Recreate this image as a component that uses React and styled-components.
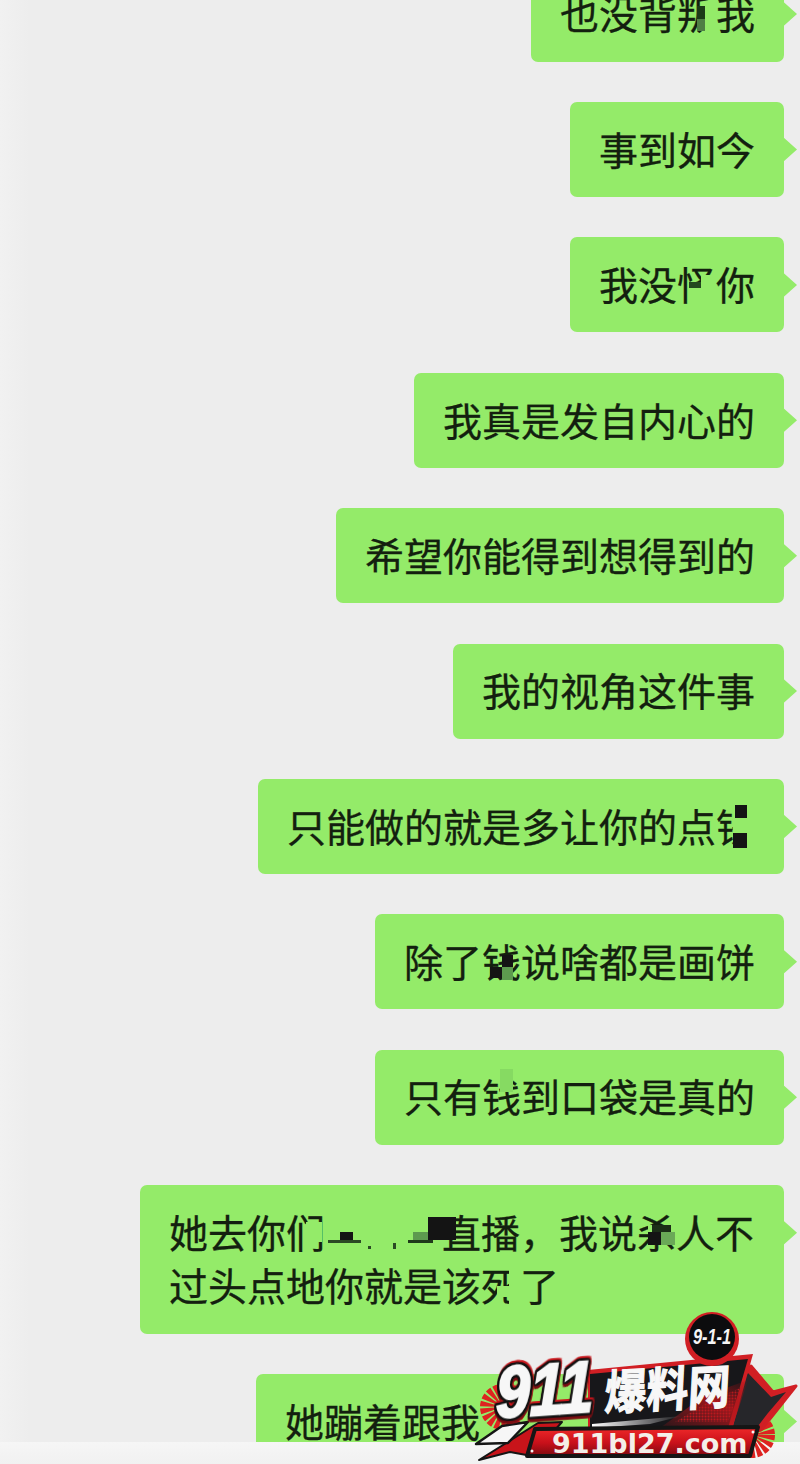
import React from "react";
import styled, { createGlobalStyle } from "styled-components";

const GREEN = "#94eb69";

const GlobalStyle = createGlobalStyle`
  html, body {
    margin: 0;
    padding: 0;
    background: #ededed;
  }
`;

const Censor = ({ children, width, blots }) => (
  <Glyph $width={width}>
    {children}
    {blots.map(([x, y, w, h, tone], i) => (
      <Blot key={i} $x={x} $y={y} $w={w} $h={h} $tone={tone} />
    ))}
  </Glyph>
);

const Logo = () => (
  <LogoBox>
    <svg width="330" height="154" viewBox="0 0 330 154">
      <defs>
        <linearGradient id="pillFill" x1="0" y1="0" x2="0" y2="1">
          <stop offset="0" stopColor="#f02a2a" />
          <stop offset="0.55" stopColor="#c8101a" />
          <stop offset="1" stopColor="#7c0a10" />
        </linearGradient>
        <linearGradient id="glow" x1="0" y1="1" x2="1" y2="0">
          <stop offset="0" stopColor="#a3141a" stopOpacity="0.15" />
          <stop offset="0.6" stopColor="#b5161c" stopOpacity="0.85" />
          <stop offset="1" stopColor="#7a0e12" stopOpacity="0.1" />
        </linearGradient>
        <linearGradient id="streak" x1="0" y1="0" x2="1" y2="0">
          <stop offset="0" stopColor="#ffffff" />
          <stop offset="1" stopColor="#ffffff" stopOpacity="0" />
        </linearGradient>
        <pattern id="dots" width="3" height="3" patternUnits="userSpaceOnUse">
          <rect width="3" height="3" fill="#1a1a1e" />
          <circle cx="1.5" cy="1.5" r="1" fill="#d11f24" />
        </pattern>
      </defs>

      {/* sunbursts behind the badge */}
      <circle cx="33" cy="97" r="12" fill="none" stroke="#dd2320" strokeWidth="22" strokeDasharray="3 1.2" />
      <circle cx="282" cy="125" r="12" fill="none" stroke="#dd2320" strokeWidth="22" strokeDasharray="3 1.2" />

      {/* star at the back */}
      <polygon points="281,56 303,82 326,76 303,105 291,120 240,128 252,80" fill="#d11f24" stroke="#d11f24" strokeWidth="3" strokeLinejoin="round" />
      <polygon points="278,63 301,87 316,82 298,103 288,116 245,122 258,84" fill="#26262a" />

      {/* black banner */}
      <polygon points="118,60 283,44 262,120 118,126" fill="#d11f24" />
      <polygon points="120,64 278,49 258,118 120,124" fill="#17171a" />
      <polygon points="205,112 258,112 270,78 238,92" fill="url(#dots)" />
      <polygon points="190,118 262,118 278,70 234,86" fill="url(#glow)" />
      <polygon points="122,114 212,106 180,114 122,118" fill="url(#streak)" />

      {/* swoosh under the number */}
      <polygon points="9,150 68,113 92,112 62,146 40,142" fill="#c8141a" stroke="#151515" strokeWidth="2" strokeLinejoin="round" />
      <polygon points="6,134 32,116 58,112 38,133" fill="#f6f6f6" stroke="#151515" strokeWidth="2.5" strokeLinejoin="round" />

      {/* url plate */}
      <polygon points="57,146 65,119 288,117 280,146" fill="url(#pillFill)" stroke="#151515" strokeWidth="4" strokeLinejoin="round" />
      <circle cx="62" cy="141" r="1.5" fill="#f5f5f5" />
      <circle cx="283" cy="122" r="1.5" fill="#f5f5f5" />
      <UrlText x="82" y="143">911bl27.com</UrlText>

      {/* main wordmark */}
      <g transform="translate(26,108) rotate(-4) skewX(-4) scale(0.85,1)">
        <BigNumber>911</BigNumber>
      </g>
      <g transform="translate(134,100) rotate(-3) skewX(-6) scale(0.95,1.08)">
        <SiteName>爆料网</SiteName>
      </g>

      {/* 9-1-1 medal */}
      <circle cx="242" cy="29" r="27" fill="#d11f24" />
      <circle cx="242" cy="27" r="23" fill="#0c0c0e" />
      <g transform="translate(242,34) scale(0.78,1.05)">
        <MedalText textAnchor="middle">9-1-1</MedalText>
      </g>
    </svg>
  </LogoBox>
);

const App = () => (
  <Page>
    <GlobalStyle />
    <Thread>
      <Bubble>
        也没背
        <Censor blots={[[28, 15, 12, 33, GREEN], [20, 19, 8, 13, "#1c3a18"], [20, 32, 8, 12, "#4f7f44"]]}>叛</Censor>
        我
      </Bubble>
      <Bubble>事到如今</Bubble>
      <Bubble>
        我没
        <Censor blots={[[24, 17, 15, 29, GREEN], [12, 30, 12, 16, GREEN], [12, 24, 12, 6, "#24481f"]]}>怪</Censor>
        你
      </Bubble>
      <Bubble>我真是发自内心的</Bubble>
      <Bubble>希望你能得到想得到的</Bubble>
      <Bubble>我的视角这件事</Bubble>
      <Bubble>
        只能做的就是多让你的点
        <Censor blots={[[17, 5, 22, 43, GREEN], [19, 5, 12, 13, "#141414"], [17, 33, 14, 15, "#141414"]]}>钱</Censor>
      </Bubble>
      <Bubble>
        除了
        <Censor blots={[[20, 20, 11, 12, "#141414"], [8, 32, 12, 11, "#141414"], [20, 32, 11, 13, "#5d9a4f"]]}>钱</Censor>
        说啥都是画饼
      </Bubble>
      <Bubble>
        只有
        <Censor blots={[[18, -1, 13, 23, "#86da62"]]}>钱</Censor>
        到口袋是真的
      </Bubble>
      <Bubble>
        她去你
        <Censor blots={[[20, 16, 16, 20, GREEN]]}>们</Censor>
        <Censor
          width="117px"
          blots={[
            [15, 26, 13, 8, "#141414"],
            [3, 34, 33, 3, "#2b4a24"],
            [43, 40, 3, 3, "#2b4a24"],
            [68, 37, 3, 6, "#2b4a24"],
            [83, 34, 25, 3, "#1f3a1a"],
            [88, 26, 15, 8, "#5d9a4f"],
            [103, 11, 28, 23, "#141414"],
          ]}
        />
        {"直播\uFF0C我说"}
        <Censor blots={[[11, 19, 27, 20, GREEN], [15, 19, 19, 7, "#1c2e18"], [11, 26, 13, 13, "#141414"], [24, 26, 14, 13, "#6aa957"]]}>杀</Censor>
        人不过头点地你就是该
        <Censor blots={[[28, 5, 11, 43, GREEN], [16, 27, 12, 11, GREEN]]}>死</Censor>
        了
      </Bubble>
      <Bubble $width="528px">她蹦着跟我</Bubble>
    </Thread>
    <BottomFade />
    <Logo />
  </Page>
);

const Page = styled.div`
  position: relative;
  display: flex;
  flex-direction: column;
  height: 100vh;
  overflow: hidden;
  font-family: "Noto Sans CJK SC", "Noto Sans", sans-serif;
`;

const Thread = styled.div`
  flex: 1;
  min-height: 0;
  overflow: hidden;
  display: flex;
  flex-direction: column;
  align-items: flex-end;
  gap: 40.4px;
  padding-right: 16px;
  background: linear-gradient(90deg, #f1f1f1 0, #ededed 30px);

  & > :first-child {
    margin-top: -33.4px;
  }
`;

const Bubble = styled.div`
  position: relative;
  flex: none;
  box-sizing: border-box;
  width: ${(p) => p.$width || "auto"};
  max-width: 644px;
  padding: 19.75px 29px 21.75px;
  border-radius: 7px;
  background: ${GREEN};
  color: #13200f;
  font-size: 39px;
  line-height: 53.5px;
  -webkit-text-stroke: 0.3px #13200f;

  &::after {
    content: "";
    position: absolute;
    top: 35px;
    right: -13px;
    width: 14px;
    height: 25px;
    background: ${GREEN};
    clip-path: polygon(0 0, 100% 50%, 0 100%);
  }
`;

const Glyph = styled.span`
  position: relative;
  display: inline-block;
  width: ${(p) => p.$width || "auto"};
  height: 53.5px;
  vertical-align: top;
`;

const Blot = styled.i`
  position: absolute;
  left: ${(p) => p.$x}px;
  top: ${(p) => p.$y + 1}px;
  width: ${(p) => p.$w}px;
  height: ${(p) => p.$h}px;
  background: ${(p) => p.$tone};
`;

const BottomFade = styled.div`
  flex: none;
  height: 22px;
  background: linear-gradient(180deg, #f6f6f6, #f1f1f1);
`;

const LogoBox = styled.div`
  position: absolute;
  right: 0;
  bottom: 0;
  width: 330px;
  height: 154px;

  svg {
    display: block;
  }
`;

const BigNumber = styled.text`
  font-family: "Liberation Sans", sans-serif;
  font-size: 72px;
  font-weight: 700;
  font-style: italic;
  fill: #f7f7f7;
  stroke: #f7f7f7;
  stroke-width: 2.5px;
  filter: drop-shadow(2px 0 0 #111) drop-shadow(-2px 0 0 #111) drop-shadow(0 2px 0 #111)
    drop-shadow(0 -2px 0 #111) drop-shadow(1.5px -1.5px 0 #c8141a) drop-shadow(0 3px 0 #7a0d12);
`;

const SiteName = styled.text`
  font-family: "Noto Sans CJK SC", sans-serif;
  font-size: 44px;
  font-weight: 700;
  fill: #f7f7f7;
  stroke: #f7f7f7;
  stroke-width: 1.2px;
`;

const UrlText = styled.text`
  font-family: "DejaVu Sans", sans-serif;
  font-size: 27px;
  font-weight: 700;
  fill: #f4efe9;
`;

const MedalText = styled.text`
  font-family: "Liberation Sans", sans-serif;
  font-size: 21px;
  font-weight: 700;
  font-style: italic;
  fill: #f5f5f5;
`;

export default App;
